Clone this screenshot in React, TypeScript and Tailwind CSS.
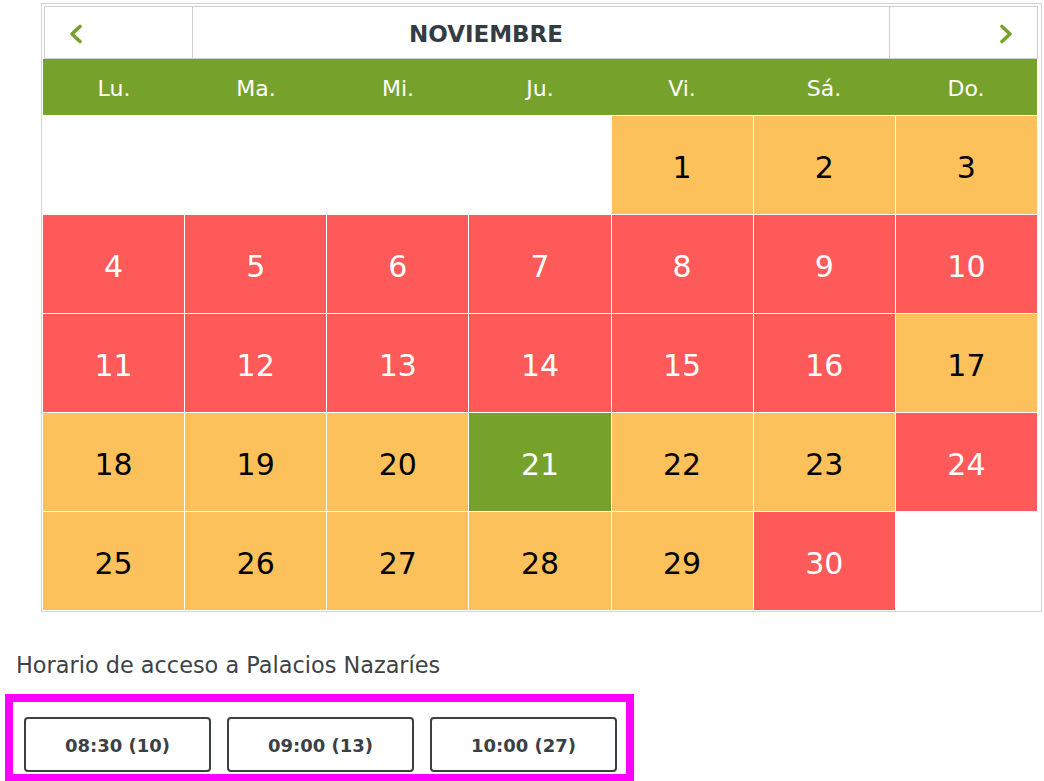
import React from 'react';

type Day = { n: number; s: 'o' | 'r' | 'g' } | null;

const DAYS = ['Lu.', 'Ma.', 'Mi.', 'Ju.', 'Vi.', 'Sá.', 'Do.'];

const red = [4, 5, 6, 7, 8, 9, 10, 11, 12, 13, 14, 15, 16, 24, 30];

function buildCells(): Day[] {
  const cells: Day[] = [null, null, null, null];
  for (let n = 1; n <= 30; n++) {
    cells.push({ n, s: n === 21 ? 'g' : red.includes(n) ? 'r' : 'o' });
  }
  cells.push(null);
  return cells;
}

function Chevron({ dir }: { dir: 'l' | 'r' }) {
  return (
    <svg width="15" height="20" viewBox="0 0 15 20" className="text-[#76a22c]">
      <polyline
        points={dir === 'l' ? '12,2.5 4,10 12,17.5' : '3,2.5 11,10 3,17.5'}
        fill="none"
        stroke="currentColor"
        strokeWidth="3.6"
        strokeLinecap="round"
        strokeLinejoin="round"
      />
    </svg>
  );
}

export default function App() {
  const cells = buildCells();
  const font = { fontFamily: '"DejaVu Sans", Verdana, sans-serif' };
  return (
    <div className="min-h-[781px] bg-white" style={font}>
      <div className="ml-[41px] pt-[3px]">
        <div className="w-[1001px] border border-[#d4d4d4] pl-px pr-[4px] pt-[2px] pb-px">
          <div className="flex h-[53px] w-[994px] border border-[#cfcfcf] ml-px">
            <div className="flex w-[148px] items-center border-r border-[#cfcfcf] pl-[23px] pt-[2px]">
              <Chevron dir="l" />
            </div>
            <div className="flex flex-1 items-center justify-center pr-[110px] pt-[3px] text-[23px] font-bold text-[#333b43]">
              NOVIEMBRE
            </div>
            <div className="flex w-[148px] items-center justify-end border-l border-[#cfcfcf] pr-[23px] pt-[2px]">
              <Chevron dir="r" />
            </div>
          </div>
          <div className="grid h-[56px] w-[994px] grid-cols-7 bg-[#76a22c]">
            {DAYS.map((d) => (
              <div key={d} className="flex items-center justify-center pt-[2px] text-[22px] text-white">
                {d}
              </div>
            ))}
          </div>
          <div className="grid w-[994px] grid-cols-7 gap-px bg-white pt-px">
            {cells.map((c, i) => (
              <div
                key={i}
                className={
                  'flex h-[98px] items-center justify-center pt-[4px] text-[30px] ' +
                  (c === null
                    ? 'bg-white'
                    : c.s === 'o'
                      ? 'bg-[#fdc15b] text-black'
                      : c.s === 'r'
                        ? 'bg-[#fe5a5a] text-white'
                        : 'bg-[#76a22c] text-white')
                }
              >
                {c?.n}
              </div>
            ))}
          </div>
        </div>
      </div>
      <div className="mt-[39px] pl-[16px] text-[22.4px] leading-[28px] text-[#3d4246]">
        Horario de acceso a Palacios Nazaríes
      </div>
      <div className="ml-[5px] mt-[15px] flex h-[88px] w-[629px] gap-[16px] border-[8px] border-[#ff00ff] pl-[11px] pt-[15px]">
        {['08:30 (10)', '09:00 (13)', '10:00 (27)'].map((t) => (
          <button
            key={t}
            className="flex h-[55px] w-[187px] items-center justify-center rounded-[4px] border-2 border-[#3b4045] bg-white pt-[2px] text-[18px] font-bold text-[#3b4045]"
          >
            {t}
          </button>
        ))}
      </div>
    </div>
  );
}
